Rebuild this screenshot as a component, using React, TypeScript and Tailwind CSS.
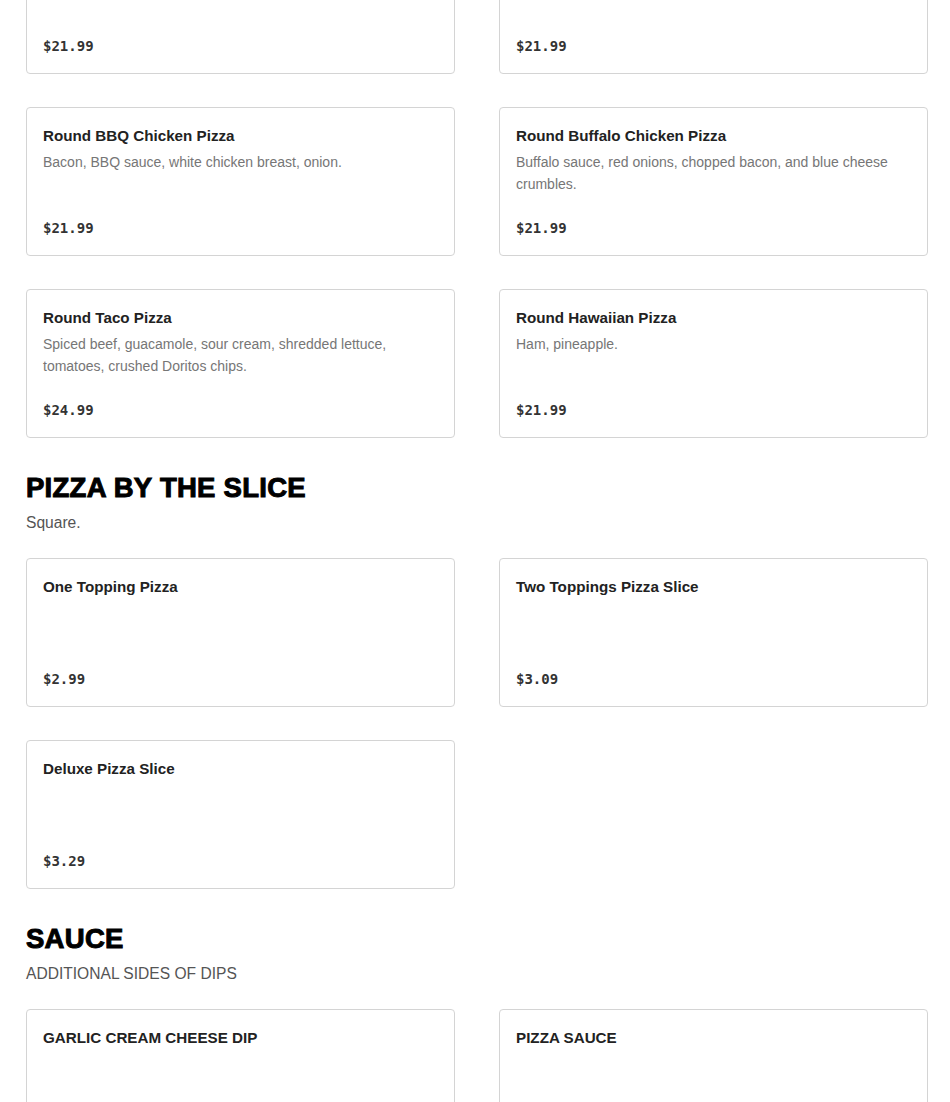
import React from 'react';

type Item = { name: string; desc?: string; price?: string };

const Card: React.FC<{ item: Item }> = ({ item }) => (
  <div className="h-[149px] rounded border border-[#d4d4d4] bg-white px-4 pt-[17px] pb-[17px] flex flex-col">
    <h3 className="text-[15.2px] leading-[22px] font-semibold text-[#222]">{item.name}</h3>
    {item.desc && (
      <p className="mt-[4px] text-[14px] leading-[22px] text-[#767676]">{item.desc}</p>
    )}
    {item.price && (
      <p className="mt-auto font-['DejaVu_Sans_Mono',monospace] text-[14px] leading-[20px] font-bold text-[#333]">
        {item.price}
      </p>
    )}
  </div>
);

const Section: React.FC<{ title: string; sub: string; items: Item[] }> = ({ title, sub, items }) => (
  <section className="mt-[33px]">
    <h2 className="text-[27.5px] leading-[34px] font-black uppercase text-black tracking-[0.01em] [-webkit-text-stroke:1px_black]">
      {title}
    </h2>
    <p className="mt-[7px] text-[15.6px] leading-[22px] text-[#555]">{sub}</p>
    <div className="mt-[24px] grid grid-cols-2 gap-x-[44px] gap-y-[33px]">
      {items.map((it) => (
        <Card key={it.name} item={it} />
      ))}
    </div>
  </section>
);

const roundPizzas: Item[] = [
  { name: 'Round Pepperoni Pizza', price: '$21.99' },
  { name: 'Round Sausage Pizza', price: '$21.99' },
  { name: 'Round BBQ Chicken Pizza', desc: 'Bacon, BBQ sauce, white chicken breast, onion.', price: '$21.99' },
  { name: 'Round Buffalo Chicken Pizza', desc: 'Buffalo sauce, red onions, chopped bacon, and blue cheese crumbles.', price: '$21.99' },
  { name: 'Round Taco Pizza', desc: 'Spiced beef, guacamole, sour cream, shredded lettuce, tomatoes, crushed Doritos chips.', price: '$24.99' },
  { name: 'Round Hawaiian Pizza', desc: 'Ham, pineapple.', price: '$21.99' },
];

const slices: Item[] = [
  { name: 'One Topping Pizza', price: '$2.99' },
  { name: 'Two Toppings Pizza Slice', price: '$3.09' },
  { name: 'Deluxe Pizza Slice', price: '$3.29' },
];

const sauces: Item[] = [
  { name: 'GARLIC CREAM CHEESE DIP' },
  { name: 'PIZZA SAUCE' },
];

export default function App() {
  return (
    <div className="min-h-screen bg-white font-['Liberation_Sans',Arial,sans-serif] overflow-hidden">
      <div className="w-[902px] ml-[26px] pb-10">
        <div className="-mt-[75px] grid grid-cols-2 gap-x-[44px] gap-y-[33px]">
          {roundPizzas.map((it) => (
            <Card key={it.name} item={it} />
          ))}
        </div>
        <Section title="Pizza by the slice" sub="Square." items={slices} />
        <Section title="Sauce" sub="ADDITIONAL SIDES OF DIPS" items={sauces} />
      </div>
    </div>
  );
}
